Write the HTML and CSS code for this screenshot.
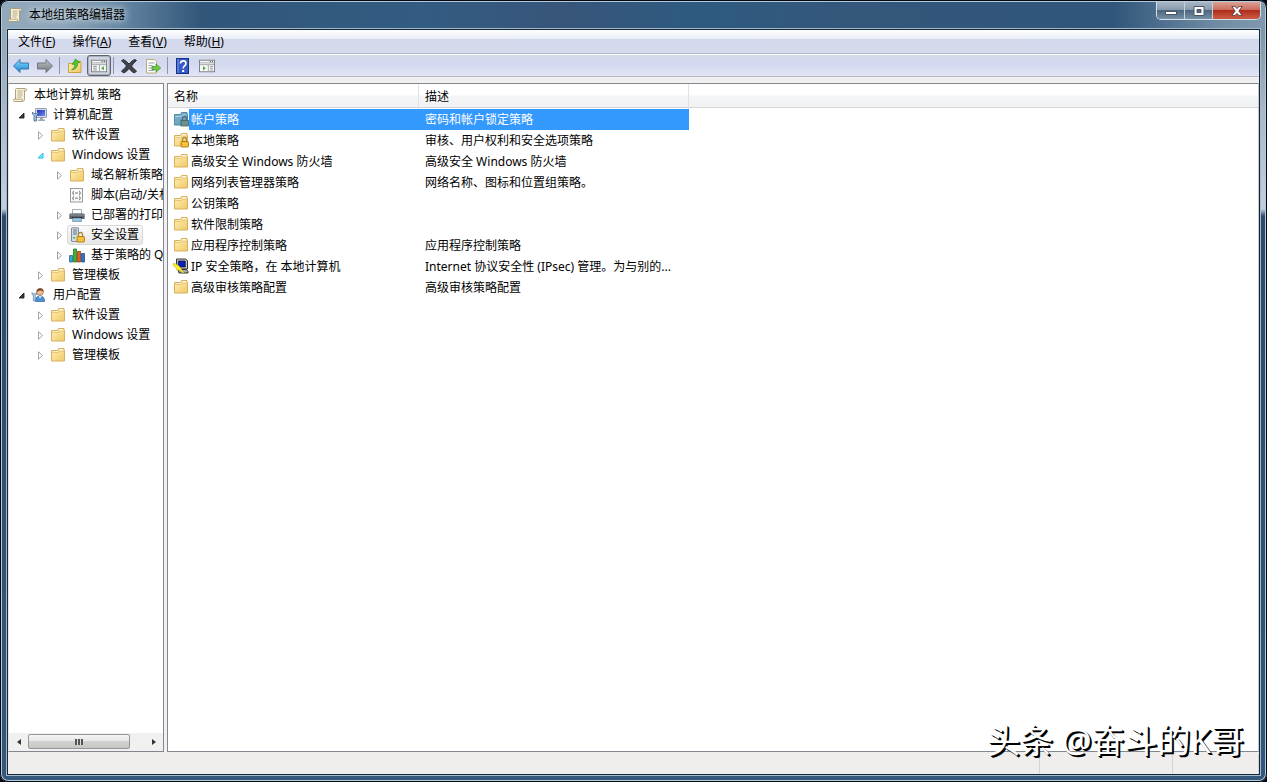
FILE: index.html
```
<!DOCTYPE html>
<html lang="zh-CN">
<head>
<meta charset="utf-8">
<title>本地组策略编辑器</title>
<link rel="stylesheet" href="styles.css">
</head>
<body>
<svg class="defs" aria-hidden="true">
  <defs>
    <linearGradient id="gold" x1="0" y1="0" x2="1" y2="1"><stop offset="0" stop-color="#fff0b4"/><stop offset="1" stop-color="#efc968"/></linearGradient>
    <linearGradient id="goldSel" x1="0" y1="0" x2="1" y2="1"><stop offset="0" stop-color="#86b8cf"/><stop offset="1" stop-color="#5b96b6"/></linearGradient>
    <linearGradient id="blueArrow" x1="0" y1="0" x2="0" y2="1"><stop offset="0" stop-color="#8fdcff"/><stop offset="1" stop-color="#1583cf"/></linearGradient>
    <linearGradient id="grayArrow" x1="0" y1="0" x2="0" y2="1"><stop offset="0" stop-color="#c3c6cb"/><stop offset="1" stop-color="#6f7378"/></linearGradient>
    <linearGradient id="screen" x1="0" y1="0" x2="1" y2="1"><stop offset="0" stop-color="#1b2cb8"/><stop offset="1" stop-color="#6f8cf0"/></linearGradient>
    <symbol id="folder" viewBox="0 0 16 16"><path d="M1.500 3.500h6l1-2h5.500v2h.5v10.500h-13z" fill="url(#gold)" stroke="#d8b05c"/><path d="M9.500 2.500h3.500M2.500 5.500l6-1 1-1h4" stroke="#fffbe6" fill="none"/><path d="M2 5.500h6l1-1.500h5" stroke="#dcb45a" fill="none" stroke-width=".7"/></symbol>
    <symbol id="lock" viewBox="0 0 16 16"><path d="M9.500 10V7.500a2 2 0 0 1 4 0V10" fill="none" stroke="#a88c3c" stroke-width="1.300"/><rect x="8" y="9.500" width="7.500" height="5.500" rx=".8" fill="#f3b526" stroke="#a87408" stroke-width=".8"/><path d="M9 11.500h5.500M9 13.300h5.500" stroke="#ffdc74" stroke-width=".6"/></symbol>
    <symbol id="scroll" viewBox="0 0 16 16"><path d="M4.500 1.500h9c1.500 0 1.500 2.500 0 2.500h-1v8.500c0 1.500-1 2-2 2h-8c-1.500 0-1.500-2.500 0-2.500h1V3c0-1 .3-1.500 1-1.500z" fill="#f7f0d8" stroke="#a69872" stroke-width=".9"/><path d="M5.500 4h5M5.500 6h5M5.500 8h5M5.500 10h4M3 12.200h7.500v2M12.300 4V2.500" stroke="#a99c7a" stroke-width=".8" fill="none"/></symbol>
    <symbol id="computer" viewBox="0 0 16 16"><rect x="4.500" y="1.500" width="11" height="9" rx=".6" fill="#d7dde8" stroke="#7d889e" stroke-width=".8"/><rect x="6" y="3" width="8" height="6" fill="url(#screen)"/><path d="M9 11h3v1.500h2V14H7v-1.500h2z" fill="#9ba8bc"/><path d="M1.500 5v2L3 8.500V14h2.500V8.500l1.500-1.500V5l-1.500 1.500H3z" fill="#9cc0df" stroke="#45688a" stroke-width=".8"/></symbol>
    <symbol id="user" viewBox="0 0 16 16"><circle cx="9" cy="5" r="3.400" fill="#f0b98c" stroke="#8a6148" stroke-width=".6"/><path d="M5.500 5c-.5-4.500 7.500-5.500 7 0-1.500-2-4-2-7 0z" fill="#754328"/><path d="M4.500 14.500c0-4 1.500-5.500 4.500-5.500s4.500 1.500 4.500 5.500z" fill="#4b91d4" stroke="#28659f" stroke-width=".7"/><path d="M7.500 9.300l1.500 2 2-2" fill="#fff"/><path d="M1 5.500v2l1.300 1V14h2V8.500l1.200-1v-2l-1 1.200H2z" fill="#a9cbe4" stroke="#55789a" stroke-width=".6"/></symbol>
    <symbol id="script" viewBox="0 0 16 16"><rect x="1.500" y="1.500" width="12" height="13.500" fill="#fbfbfb" stroke="#999"/><path d="M5 4c-1.500 0 0 2-1.500 2C5 6 3.500 8 5 8M10 4c1.500 0 0 2 1.500 2C10 6 11.500 8 10 8M5 9.500c-1.500 0 0 1.700-1.500 1.700 1.500 0 0 1.800 1.500 1.800M10 9.500c1.500 0 0 1.700 1.500 1.700-1.500 0 0 1.800-1.500 1.800M6 6h3M6 11.200h3" fill="none" stroke="#555" stroke-width=".8"/></symbol>
    <symbol id="printer" viewBox="0 0 16 16"><path d="M3.500 2.500h9V7h-9z" fill="#fff" stroke="#8e959d" stroke-width=".8"/><path d="M1 6.500h14l.7 1V12H.3V7.500z" fill="#5d656e"/><path d="M.5 8h15" stroke="#a0a8b0" stroke-width=".8"/><path d="M3 10h10v1H3z" fill="#22272c"/><path d="M4 11h8l.6 3.500H3.400z" fill="#8ec5ec" stroke="#6f7780" stroke-width=".6"/></symbol>
    <symbol id="server" viewBox="0 0 16 16"><rect x="2.500" y=".8" width="7" height="13.700" rx=".5" fill="#d6dde5" stroke="#74818f" stroke-width=".9"/><path d="M4 3h4M4 5h4M4 7h4" stroke="#53667b" stroke-width=".9"/><rect x="4" y="10" width="2" height="1.500" fill="#42b54d"/><use href="#lock"/></symbol>
    <symbol id="bars" viewBox="0 0 16 16"><path d="M.5 8.500h3V15h-3z" fill="#36a6dd" stroke="#145980" stroke-width=".7"/><path d="M4.500 2h3v13h-3z" fill="#3fb52f" stroke="#216413" stroke-width=".7"/><path d="M8.500 4.500h3V15h-3z" fill="#e45c24" stroke="#862d0a" stroke-width=".7"/><path d="M12.500 6.500h3V15h-3z" fill="#2877ce" stroke="#10417a" stroke-width=".7"/></symbol>
    <symbol id="ipsec" viewBox="0 0 16 16"><path d="M3.500 1h9l2 1.500V11H5L3.500 9.500z" fill="#c7c7c7" stroke="#222" stroke-width=".9"/><path d="M5.300 3h7v6h-7z" fill="#0820bd" stroke="#111" stroke-width=".7"/><path d="M5 11.500h8.500l1.500 2v1.500H6z" fill="#aaa" stroke="#222" stroke-width=".9"/><path d="M.2 5.500L3 6l3 2 5 6.500-1 .8L6.500 12 4 12.500 3 9.500.5 8z" fill="#fff32a" stroke="#a8a000" stroke-width=".5"/></symbol>
    <symbol id="back" viewBox="0 0 16 16"><path d="M.5 8L7 1.500V5h8.500v6H7v3.500z" fill="url(#blueArrow)" stroke="#2c70aa" stroke-width=".9"/></symbol>
    <symbol id="forward" viewBox="0 0 16 16"><path d="M15.500 8L9 1.500V5H.5v6H9v3.500z" fill="url(#grayArrow)" stroke="#6b6f75" stroke-width=".9"/></symbol>
    <symbol id="up" viewBox="0 0 16 16"><path d="M1.500 5.500h6l1-2h5.500v11H1.500z" fill="url(#gold)" stroke="#d0a13f"/><path d="M4.500 12c2.500-1.500 3.500-3.500 3-6L5 6.500 8.500 1l4.500 3.500-2.500.3C11 8.500 9 11.500 4.500 12z" fill="#55c52e" stroke="#2d8a14" stroke-width=".6"/></symbol>
    <symbol id="pane" viewBox="0 0 18 16"><rect x=".5" y="1.500" width="17" height="13" fill="#f8f8f8" stroke="#74787e"/><path d="M1 4.500h16M1 6.500h16" stroke="#9a9ea5"/><path d="M12 3h1.200M14.500 3h1.200" stroke="#333"/></symbol>
    <symbol id="delete" viewBox="0 0 16 16"><path d="M2 1.500C4 2 6 4 8 6c2-2.200 4-4 6-4.500l1.500 1C13.500 4 12 6 10.500 8c1.500 2 3 3.700 5 5l-2 2c-2-.7-4-2.700-5.500-4.500C6.500 12.500 4.500 14.300 2.500 15l-2-2c2-1.300 3.500-3 5-5C4 6 2.500 4 .5 3z" fill="#404348" stroke="#24272b" stroke-width=".9"/></symbol>
    <symbol id="export" viewBox="0 0 16 16"><path d="M1.500 1.500h8l2 2V15h-10z" fill="#fffef6" stroke="#b9a978"/><path d="M3.500 5h6M3.500 7.500h4M3.500 10h4M3.500 12.500h6" stroke="#7e9ab0" stroke-width=".9"/><path d="M7 8.500h4V6l4.700 4-4.700 4v-2.500H7z" fill="#71cc3c" stroke="#348b1b" stroke-width=".7"/></symbol>
    <symbol id="help" viewBox="0 0 16 16"><rect x="1.500" y=".5" width="12" height="15" fill="#3559c7" stroke="#183080"/><path d="M3 1v14" stroke="#7d9bed"/><path d="M5.500 5.500C5.500 2 11 2 11 5.500c0 2.200-2.800 2.200-2.800 5" fill="none" stroke="#fff" stroke-width="1.600"/><rect x="7.200" y="12" width="2" height="2" fill="#fff"/></symbol>
    <symbol id="closed" viewBox="0 0 9 9"><path d="M2.500 .8v7.400l4-3.700z" fill="#fff" stroke="#989898" stroke-width=".9"/></symbol>
    <symbol id="open" viewBox="0 0 9 9"><path d="M7 2v5H2z" fill="#3d3d3d" stroke="#111" stroke-width=".8"/></symbol>
    <symbol id="hot" viewBox="0 0 9 9"><path d="M7 2v5H2z" fill="#7de2fb" stroke="#22c2ea" stroke-width="1"/></symbol>
  </defs>
</svg>

<div class="window">
  <header class="titlebar">
    <svg class="icon"><use href="#scroll"/></svg>
    <h1 class="title">本地组策略编辑器</h1>
    <div class="controls">
      <button class="ctl" aria-label="最小化"><svg width="14" height="10" viewBox="0 0 14 10"><rect x="1.500" y="5.500" width="11" height="3" fill="#fff" stroke="#4b5668"/></svg></button>
      <button class="ctl" aria-label="最大化"><svg width="12" height="10" viewBox="0 0 12 10"><path d="M1 .5h10v9H1zM4 3.500v3h4v-3z" fill="#fff" fill-rule="evenodd" stroke="#4b5668"/></svg></button>
      <button class="ctl ctl-close" aria-label="关闭"><svg width="12" height="10" viewBox="0 0 12 10"><path d="M.8.6h3.400L6 2.600 7.800.6h3.400L7.800 5l3.400 4.400H7.800L6 7.400l-1.800 2H.8L4.200 5z" fill="#fff" stroke="#5d3a40" stroke-width=".9"/></svg></button>
    </div>
  </header>

  <div class="client">
    <nav class="menubar">
      <button class="menu">文件(<u>F</u>)</button>
      <button class="menu">操作(<u>A</u>)</button>
      <button class="menu">查看(<u>V</u>)</button>
      <button class="menu">帮助(<u>H</u>)</button>
    </nav>
    <div class="toolbar">
      <button class="tool" aria-label="后退"><svg class="icon"><use href="#back"/></svg></button>
      <button class="tool" aria-label="前进"><svg class="icon"><use href="#forward"/></svg></button>
      <span class="sep"></span>
      <button class="tool" aria-label="上一级"><svg class="icon"><use href="#up"/></svg></button>
      <button class="tool tool-on" aria-label="显示/隐藏控制台树"><svg class="icon" viewBox="0 0 18 16"><use href="#pane"/><path d="M9.500 7v7" stroke="#9a9ea5"/><path d="M2.500 8.500h4M2.500 10.500h4M2.500 12.500h4" stroke="#888"/><path d="M14.500 8v5l-3-2.500z" fill="#46a832"/></svg></button>
      <span class="sep"></span>
      <button class="tool" aria-label="删除"><svg class="icon"><use href="#delete"/></svg></button>
      <button class="tool" aria-label="导出列表"><svg class="icon"><use href="#export"/></svg></button>
      <span class="sep"></span>
      <button class="tool" aria-label="帮助"><svg class="icon"><use href="#help"/></svg></button>
      <button class="tool" aria-label="显示/隐藏操作窗格"><svg class="icon" viewBox="0 0 18 16"><use href="#pane"/><path d="M10.500 7v7" stroke="#9a9ea5"/><path d="M12.500 8.500h3M12.500 10.500h3M12.500 12.500h3" stroke="#888"/><path d="M4.500 8v5l3-2.500z" fill="#46a832"/></svg></button>
    </div>

    <main class="panes">
      <aside class="tree-pane">
        <ul class="tree">
          <li class="node root"><svg class="icon"><use href="#scroll"/></svg><span class="label">本地计算机 策略</span></li>
          <li class="node l1"><svg class="twist"><use href="#open"/></svg><svg class="icon"><use href="#computer"/></svg><span class="label">计算机配置</span></li>
          <li class="node l2"><svg class="twist"><use href="#closed"/></svg><svg class="icon"><use href="#folder"/></svg><span class="label">软件设置</span></li>
          <li class="node l2"><svg class="twist"><use href="#hot"/></svg><svg class="icon"><use href="#folder"/></svg><span class="label">Windows 设置</span></li>
          <li class="node l3"><svg class="twist"><use href="#closed"/></svg><svg class="icon"><use href="#folder"/></svg><span class="label">域名解析策略</span></li>
          <li class="node l3"><svg class="twist"></svg><svg class="icon"><use href="#script"/></svg><span class="label">脚本(启动/关机)</span></li>
          <li class="node l3"><svg class="twist"><use href="#closed"/></svg><svg class="icon"><use href="#printer"/></svg><span class="label">已部署的打印机</span></li>
          <li class="node l3"><svg class="twist"><use href="#closed"/></svg><span class="current"><svg class="icon"><use href="#server"/></svg><span class="label">安全设置</span></span></li>
          <li class="node l3"><svg class="twist"><use href="#closed"/></svg><svg class="icon"><use href="#bars"/></svg><span class="label">基于策略的 QoS</span></li>
          <li class="node l2"><svg class="twist"><use href="#closed"/></svg><svg class="icon"><use href="#folder"/></svg><span class="label">管理模板</span></li>
          <li class="node l1"><svg class="twist"><use href="#open"/></svg><svg class="icon"><use href="#user"/></svg><span class="label">用户配置</span></li>
          <li class="node l2"><svg class="twist"><use href="#closed"/></svg><svg class="icon"><use href="#folder"/></svg><span class="label">软件设置</span></li>
          <li class="node l2"><svg class="twist"><use href="#closed"/></svg><svg class="icon"><use href="#folder"/></svg><span class="label">Windows 设置</span></li>
          <li class="node l2"><svg class="twist"><use href="#closed"/></svg><svg class="icon"><use href="#folder"/></svg><span class="label">管理模板</span></li>
        </ul>
        <div class="scrollbar">
          <button class="arrow" aria-label="向左滚动"><svg width="4" height="6" viewBox="0 0 4 6"><path d="M4 0v6L0 3z" fill="#333"/></svg></button>
          <div class="track"><div class="thumb"><span class="grip"></span></div></div>
          <button class="arrow" aria-label="向右滚动"><svg width="4" height="6" viewBox="0 0 4 6"><path d="M0 0v6l4-3z" fill="#333"/></svg></button>
        </div>
      </aside>
      <section class="list-pane">
        <div class="head-fill">
        <table class="list">
          <thead><tr><th class="col-name">名称</th><th class="col-desc">描述</th></tr></thead>
          <tbody>
            <tr class="selected"><td><span class="cell"><svg class="icon" viewBox="0 0 16 16"><path d="M1.500 3.500h6l1-2h5.500v2h.5v10.500h-13z" fill="url(#goldSel)" stroke="#4f88a8"/><path d="M2.500 5.500h6l1-1.500h4" stroke="#a8d2e2" fill="none"/><path d="M9.500 10V7.500a2 2 0 0 1 4 0V10" fill="none" stroke="#55727c" stroke-width="1.300"/><rect x="8" y="9.500" width="7.500" height="5.500" fill="#6f8f88" stroke="#3f646c" stroke-width=".8"/></svg><span class="name">帐户策略</span></span></td><td>密码和帐户锁定策略</td></tr>
            <tr><td><span class="cell"><svg class="icon"><use href="#folder"/><use href="#lock"/></svg><span class="name">本地策略</span></span></td><td>审核、用户权利和安全选项策略</td></tr>
            <tr><td><span class="cell"><svg class="icon"><use href="#folder"/></svg><span class="name">高级安全 Windows 防火墙</span></span></td><td>高级安全 Windows 防火墙</td></tr>
            <tr><td><span class="cell"><svg class="icon"><use href="#folder"/></svg><span class="name">网络列表管理器策略</span></span></td><td>网络名称、图标和位置组策略。</td></tr>
            <tr><td><span class="cell"><svg class="icon"><use href="#folder"/></svg><span class="name">公钥策略</span></span></td><td></td></tr>
            <tr><td><span class="cell"><svg class="icon"><use href="#folder"/></svg><span class="name">软件限制策略</span></span></td><td></td></tr>
            <tr><td><span class="cell"><svg class="icon"><use href="#folder"/></svg><span class="name">应用程序控制策略</span></span></td><td>应用程序控制策略</td></tr>
            <tr><td><span class="cell"><svg class="icon"><use href="#ipsec"/></svg><span class="name">IP 安全策略，在 本地计算机</span></span></td><td>Internet 协议安全性 (IPsec) 管理。为与别的...</td></tr>
            <tr><td><span class="cell"><svg class="icon"><use href="#folder"/></svg><span class="name">高级审核策略配置</span></span></td><td>高级审核策略配置</td></tr>
          </tbody>
        </table>
        </div>
      </section>
    </main>
    <footer class="status"><span class="part part-main"></span><span class="part part-mid"></span><span class="part part-end"></span></footer>
  </div>
</div>
<div class="watermark">头条 @奋斗的K哥</div>
</body>
</html>
```
FILE: styles.css
```
* { box-sizing: border-box; }

html, body { height: 100%; }

body {
  margin: 0;
  background: #05080f;
  color: #000;
  font: 12px/20px "Noto Sans", "Noto Sans CJK SC", sans-serif;
  overflow: hidden;
}

button {
  margin: 0;
  padding: 0;
  border: 0;
  background: none;
  color: inherit;
  font: inherit;
}

.defs { position: absolute; width: 0; height: 0; }

.icon { flex: none; width: 16px; height: 16px; }

.window {
  display: flex;
  flex-direction: column;
  height: 100vh;
  padding: 0 6px 6px;
  border: 1px solid #b4cbdc;
  border-radius: 8px;
  outline: 1px solid #05080f;
  outline-offset: -1px;
  background:
    linear-gradient(#8fa5b8, #a9b7c8 80px, #c3cfdd 180px, #2d4a6c 187px, #33587b) left 0 top 28px / 7px 100% no-repeat,
    linear-gradient(#7d94a8, #a9b7c8 80px, #c3cfdd 180px, #2d4a6c 187px, #33587b) right 0 top 28px / 7px 100% no-repeat,
    #33587b;
  box-shadow: inset 0 0 0 1px #b4cbdc;
}

.titlebar {
  display: flex;
  align-items: flex-start;
  flex: none;
  height: 27px;
  margin: 1px -5px 0;
  padding-left: 5px;
  border-radius: 6px 6px 0 0;
  background: linear-gradient(90deg, #93a9bc 0, #8ba3b8 60px, #5e7f9c 130px, #31567a 200px, #335c82 420px, #38557a 560px, #2e5a80 690px, #34577b 850px, #30567b 88%, #6f8ba3 96%, #8199ad);
}
.titlebar > .icon { margin: 5px 0 0; }

.title {
  margin: 3px 0 0 6px;
  font-size: 12px;
  line-height: 20px;
  font-weight: 400;
  text-shadow: 0 0 6px #d5e0e9, 0 0 10px #d5e0e9;
}

.controls {
  display: flex;
  height: 18px;
  margin-left: auto;
  margin-right: 4px;
  border: 1px solid #d3dfe8;
  border-top: 0;
  border-radius: 0 0 5px 5px;
  overflow: hidden;
}
.ctl {
  display: flex;
  align-items: center;
  justify-content: center;
  width: 28px;
  border-right: 1px solid #c6d2dd;
  background: linear-gradient(#a9b7c5, #8498ab 50%, #4e6780 50%, #7890a6);
}
.ctl-close {
  width: 47px;
  border-right: 0;
  background: linear-gradient(#dca096, #ca6a5b 48%, #ae2c19 50%, #c8553f 90%);
}

.client {
  display: flex;
  flex: 1;
  flex-direction: column;
  min-height: 0;
  border: 1px solid #15263a;
  outline: 1px solid #a3bacb;
  background: #f0f0f0;
}

.menubar {
  display: flex;
  flex: none;
  gap: 17px;
  height: 24px;
  padding: 2px 10px;
  border-bottom: 1px solid #b3b8c8;
  background: linear-gradient(#fff, #e9edf7 9px, #d3d9ec 9px, #d5dbec);
}

.toolbar {
  display: flex;
  align-items: center;
  flex: none;
  height: 23px;
  padding: 0 1px;
  border-top: 1px solid #fff;
  border-bottom: 1px solid #b6bac4;
  background: linear-gradient(#d4dbe8, #d3d8f0 8px, #e1e5f5);
}
.tool {
  display: flex;
  align-items: center;
  justify-content: center;
  width: 24px;
  height: 21px;
}
.tool-on {
  border: 1px solid #5c6270;
  border-radius: 3px;
  background: #d3d8e2;
  box-shadow: inset 0 0 1px 1px #a9afbd;
}
.sep { width: 1px; height: 17px; margin: 0 3px 0 2px; background: #8f95a3; }

.panes {
  display: grid;
  grid-template-columns: 156px minmax(0, 1fr);
  column-gap: 3px;
  flex: 1;
  min-height: 0;
  margin-top: 6px;
}
.tree-pane, .list-pane {
  min-height: 0;
  border: 1px solid #828790;
  background: #fff;
  overflow: hidden;
}
.tree-pane { display: flex; flex-direction: column; border-left-color: #e3e3e3; }
.list-pane { border-right-color: #c8c8c8; }

.tree { flex: 1; min-height: 0; margin: 0; padding: 1px 0 0; list-style: none; overflow: hidden; }
.node { display: flex; align-items: center; height: 20px; white-space: nowrap; }
.node .label { margin-left: 6px; }
.root { padding-left: 3px; }
.twist { flex: none; width: 9px; height: 9px; margin-right: 5px; }
.l1 { padding-left: 8px; }
.l2 { padding-left: 27px; }
.l3 { padding-left: 46px; }
.current {
  display: flex;
  align-items: center;
  height: 20px;
  margin-left: -2px;
  padding: 0 3px 0 1px;
  border: 1px solid #d9d9d9;
  border-radius: 3px;
  background: linear-gradient(#fafafa, #e7e7e7);
}

.scrollbar { display: flex; flex: none; height: 18px; padding: 1px 0 2px; background: #f0f0f0; }
.arrow { display: flex; align-items: center; justify-content: center; width: 19px; }
.track { flex: 1; }
.thumb {
  display: flex;
  align-items: center;
  justify-content: center;
  width: 88%;
  height: 15px;
  border: 1px solid #979797;
  border-radius: 2px;
  background: linear-gradient(#f4f4f4, #e6e6e6 50%, #d2d2d2 50%, #c6c6c6);
}
.grip { width: 8px; height: 6px; background: repeating-linear-gradient(90deg, #555 0 2px, #ddd 2px 3px); }

.head-fill { background: linear-gradient(#fff, #fff 11px, #f4f5f6 12px, #f1f2f4 23px, #d5d5d5 23px, #d5d5d5 24px, #fff 24px) no-repeat; }

.list { width: 521px; border-collapse: separate; border-spacing: 0; table-layout: fixed; }
.list th {
  height: 25px;
  padding: 3px 6px 2px;
  border-right: 1px solid #e0e2e5;
  font-weight: 400;
  text-align: left;
}
.col-name { width: 251px; }
.list td { height: 21px; padding: 0 6px; white-space: nowrap; }
.list td:first-child { padding: 0 0 0 5px; }
.cell { display: flex; align-items: flex-start; height: 21px; }
.cell .icon { margin-top: 2px; }
.name { flex: 1; height: 21px; padding: 1px 0 0 2px; }
.selected { color: #fff; }
.selected .name, .selected td + td { background: #3399ff; }

.status { display: flex; flex: none; height: 22px; padding-top: 2px; background: #f0eded; }
.part { border-right: 1px solid #d5d2d2; }
.part-main { flex: 1; }
.part-mid { width: 133px; }
.part-end { width: 86px; }

.watermark {
  position: absolute;
  right: 23px;
  bottom: 19px;
  color: #fff;
  font-size: 33px;
  line-height: 44px;
  text-shadow: 1px 1px 0 #000, 2px 2px 0 #000;
}
```
